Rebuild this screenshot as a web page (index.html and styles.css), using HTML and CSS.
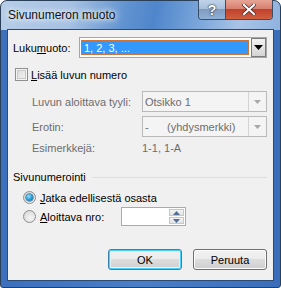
FILE: index.html
```html
<!DOCTYPE html>
<html>
<head>
<meta charset="utf-8">
<link rel="stylesheet" href="styles.css">
</head>
<body>
<div class="window">
  <div class="titlebar">
    <span class="title">Sivunumeron muoto</span>
    <div class="caption-buttons">
      <div class="cap help">?</div>
      <div class="cap close">
        <svg width="14" height="11" viewBox="0 0 14 11"><path d="M2 1 L12 10 M12 1 L2 10" stroke="#3a1a1a" stroke-width="3.4" stroke-linecap="square"/><path d="M2 1 L12 10 M12 1 L2 10" stroke="#ffffff" stroke-width="2.2" stroke-linecap="square"/></svg>
      </div>
    </div>
  </div>
  <div class="client">
    <div class="row r-format">
      <span class="label lbl-format">Luku<u>m</u>uoto:</span>
      <div class="combo active">
        <div class="combo-field"><span class="sel">1, 2, 3, ...</span></div>
        <div class="drop">
          <svg width="9" height="5" viewBox="0 0 9 5"><path d="M0 0 H9 L4.5 5 Z" fill="#000"/></svg>
        </div>
      </div>
    </div>
    <div class="row r-check">
      <span class="checkbox"></span>
      <span class="label"><u>L</u>isää luvun numero</span>
    </div>
    <div class="row r-combo r-style">
      <span class="label dim lbl-indent">Luvun aloittava tyyli:</span>
      <div class="combo disabled">
        <div class="combo-field">Otsikko 1</div>
        <div class="drop"><svg width="7" height="4" viewBox="0 0 7 4"><path d="M0 0 H7 L3.5 4 Z" fill="#a8a8a8"/></svg></div>
      </div>
    </div>
    <div class="row r-combo r-sep">
      <span class="label dim lbl-indent">Erotin:</span>
      <div class="combo disabled">
        <div class="combo-field"><span class="dash">-</span>(yhdysmerkki)</div>
        <div class="drop"><svg width="7" height="4" viewBox="0 0 7 4"><path d="M0 0 H7 L3.5 4 Z" fill="#a8a8a8"/></svg></div>
      </div>
    </div>
    <div class="row r-example">
      <span class="label dim lbl-indent">Esimerkkejä:</span>
      <span class="label dim">1-1, 1-A</span>
    </div>
    <div class="row r-group">
      <span class="label">Sivunumerointi</span>
      <span class="group-line"></span>
    </div>
    <div class="row r-radio1">
      <span class="radio checked"></span>
      <span class="label"><u>J</u>atka edellisestä osasta</span>
    </div>
    <div class="row r-radio2">
      <span class="radio"></span>
      <span class="label lbl-start"><u>A</u>loittava nro:</span>
      <div class="spin">
        <div class="spin-field"></div>
        <div class="spin-btns">
          <div class="spin-btn"><svg width="7" height="4" viewBox="0 0 7 4"><path d="M0 4 H7 L3.5 0 Z" fill="#4f6d97"/></svg></div>
          <div class="spin-btn"><svg width="7" height="4" viewBox="0 0 7 4"><path d="M0 0 H7 L3.5 4 Z" fill="#4f6d97"/></svg></div>
        </div>
      </div>
    </div>
    <div class="row r-buttons">
      <button class="btn default">OK</button>
      <button class="btn">Peruuta</button>
    </div>
  </div>
</div>
</body>
</html>
```
FILE: styles.css
```css
html, body {
  margin: 0;
  padding: 0;
  background: #ffffff;
}
body {
  width: 281px;
  height: 288px;
  overflow: hidden;
}
.window {
  box-sizing: border-box;
  width: 281px;
  height: 288px;
  border: 1px solid #2a3f58;
  border-radius: 7px 7px 3px 3px;
  background:
    linear-gradient(100deg, #b7cde7 0%, #a6c1e3 25%, #5f92d0 45%, #4f86cb 55%, #7ea8db 72%, #a8c3e6 85%, #8fb3df 100%) top / 100% 29px no-repeat,
    linear-gradient(90deg, #3c70bd 0%, #4a7ec6 50%, #3a6eba 100%);
  padding: 0 6px 6px 6px;
  display: flex;
  flex-direction: column;
  font-family: "Liberation Sans", Arial, sans-serif;
}
.titlebar {
  height: 28px;
  display: flex;
  align-items: flex-start;
  position: relative;
}
.title {
  margin-left: 1px;
  margin-top: 7px;
  font-size: 12px;
  color: #111;
  text-shadow: 0 0 4px #e8f0fa, 0 0 7px #e8f0fa, 0 0 10px rgba(232,240,250,0.8);
}
.caption-buttons {
  position: absolute;
  right: 1px;
  top: -1px;
  display: flex;
  border: 1px solid #3a4e6a;
  border-top: none;
  border-radius: 0 0 4px 4px;
  overflow: hidden;
  height: 19px;
}
.cap {
  height: 19px;
  display: flex;
  align-items: center;
  justify-content: center;
}
.help {
  width: 26px;
  border-right: 1px solid #3a4e6a;
  background: linear-gradient(#c0d3e8 0%, #a9c0db 45%, #7f9cc0 50%, #90b0d5 100%);
  color: #fff;
  font-weight: bold;
  font-size: 14px;
  text-shadow: 0 0 2px #223, 0 0 1px #223;
}
.close {
  width: 46px;
  background: linear-gradient(#e6a596 0%, #d8806f 45%, #c0402b 50%, #d0603f 100%);
}
.client {
  flex: 1;
  border: 1px solid #2c4a72;
  background: #f0f0f0;
  padding: 7px 6px 0 5px;
  display: flex;
  flex-direction: column;
  font-size: 11px;
  color: #000;
}
.row {
  display: flex;
  align-items: center;
}
.label {
  white-space: nowrap;
}
.dim {
  color: #6d6d6d;
}
u {
  text-decoration-thickness: 1px;
  text-underline-offset: 1px;
}
.r-format {
  height: 21px;
}
.lbl-format {
  width: 66px;
}
.combo {
  flex: 1;
  height: 21px;
  box-sizing: border-box;
  display: flex;
  border: 1px solid #a6a6a6;
  background: #fff;
  padding: 1px;
}
.combo.active .combo-field {
  flex: 1;
  padding: 1px 1px 1px 0;
}
.sel {
  display: flex;
  align-items: center;
  height: 100%;
  box-sizing: border-box;
  background: #3399ff;
  color: #fff;
  padding-left: 3px;
  outline: 1px dotted #d2763b;
  outline-offset: -1px;
}
.combo.active .drop {
  width: 15px;
  box-sizing: border-box;
  border: 1px solid #7b7b7b;
  background: linear-gradient(#f2f2f2, #d4d4d4);
  display: flex;
  align-items: center;
  justify-content: center;
  margin: -1px -1px -1px 1px;
}
.combo.disabled {
  border-color: #b9b9b9;
  background: #f4f4f4;
  padding: 0;
}
.combo.disabled .combo-field {
  flex: 1;
  display: flex;
  align-items: center;
  padding-left: 2px;
  color: #6d6d6d;
}
.dash {
  width: 22px;
}
.combo.disabled .drop {
  width: 17px;
  border-left: 1px solid #d4d4d4;
  display: flex;
  align-items: center;
  justify-content: center;
  background: #f4f4f4;
}
.r-check {
  margin-top: 10px;
  height: 13px;
}
.checkbox {
  width: 13px;
  height: 13px;
  box-sizing: border-box;
  border: 1px solid #8f8f8f;
  background: linear-gradient(135deg, #d9d9d9, #f4f4f4);
  box-shadow: inset 0 0 0 1px #f4f4f4, inset 0 0 0 2px #c8c8c8;
  margin-left: 2px;
  margin-right: 3px;
}
.r-combo {
  height: 21px;
}
.r-style {
  margin-top: 10px;
}
.r-sep {
  margin-top: 4px;
}
.lbl-indent {
  width: 110px;
  padding-left: 19px;
}
.r-example {
  margin-top: 4px;
  height: 14px;
}
.r-group {
  margin-top: 15px;
  height: 14px;
}
.group-line {
  flex: 1;
  height: 1px;
  background: #d5dfe5;
  margin-left: 6px;
}
.radio {
  width: 13px;
  height: 13px;
  box-sizing: border-box;
  border-radius: 50%;
  border: 1px solid #8e8f8f;
  background: radial-gradient(circle at 60% 65%, #f6f6f6 0%, #e2e2e2 55%, #d0d0d0 100%);
  margin-left: 10px;
  margin-right: 4px;
  position: relative;
}
.radio.checked::after {
  content: "";
  position: absolute;
  left: 2px;
  top: 2px;
  width: 7px;
  height: 7px;
  border-radius: 50%;
  background: radial-gradient(circle at 40% 35%, #9be3ff 0%, #2ea4dc 45%, #0d5b8f 100%);
  box-shadow: 0 0 0 0.5px #17466b;
}
.r-radio1 {
  margin-top: 7px;
  height: 13px;
}
.r-radio2 {
  margin-top: 3px;
  height: 19px;
}
.lbl-start {
  width: 81px;
}
.spin {
  width: 65px;
  height: 19px;
  box-sizing: border-box;
  border: 1px solid #ababab;
  background: #fff;
  display: flex;
  padding: 1px;
}
.spin-field {
  flex: 1;
}
.spin-btns {
  width: 15px;
  display: flex;
  flex-direction: column;
  gap: 1px;
}
.spin-btn {
  flex: 1;
  box-sizing: border-box;
  border: 1px solid #c4c8cc;
  background: linear-gradient(#f3f3f3, #e2e3e5);
  display: flex;
  align-items: center;
  justify-content: center;
}
.r-buttons {
  margin-top: 23px;
  height: 21px;
  justify-content: flex-end;
  gap: 11px;
}
.btn {
  width: 74px;
  height: 21px;
  box-sizing: border-box;
  border: 1px solid #707070;
  border-radius: 3px;
  background: linear-gradient(#f2f2f2 0%, #ebebeb 49%, #dddddd 50%, #cfcfcf 100%);
  box-shadow: inset 0 0 0 1px #fcfcfc;
  font-family: "Liberation Sans", Arial, sans-serif;
  font-size: 11px;
  color: #000;
  padding: 0;
  margin: 0;
}
.btn.default {
  border-color: #3c7fb1;
  box-shadow: inset 0 0 0 1px #48d2fb, inset 0 0 0 2px #e0f4fc;
}
```
